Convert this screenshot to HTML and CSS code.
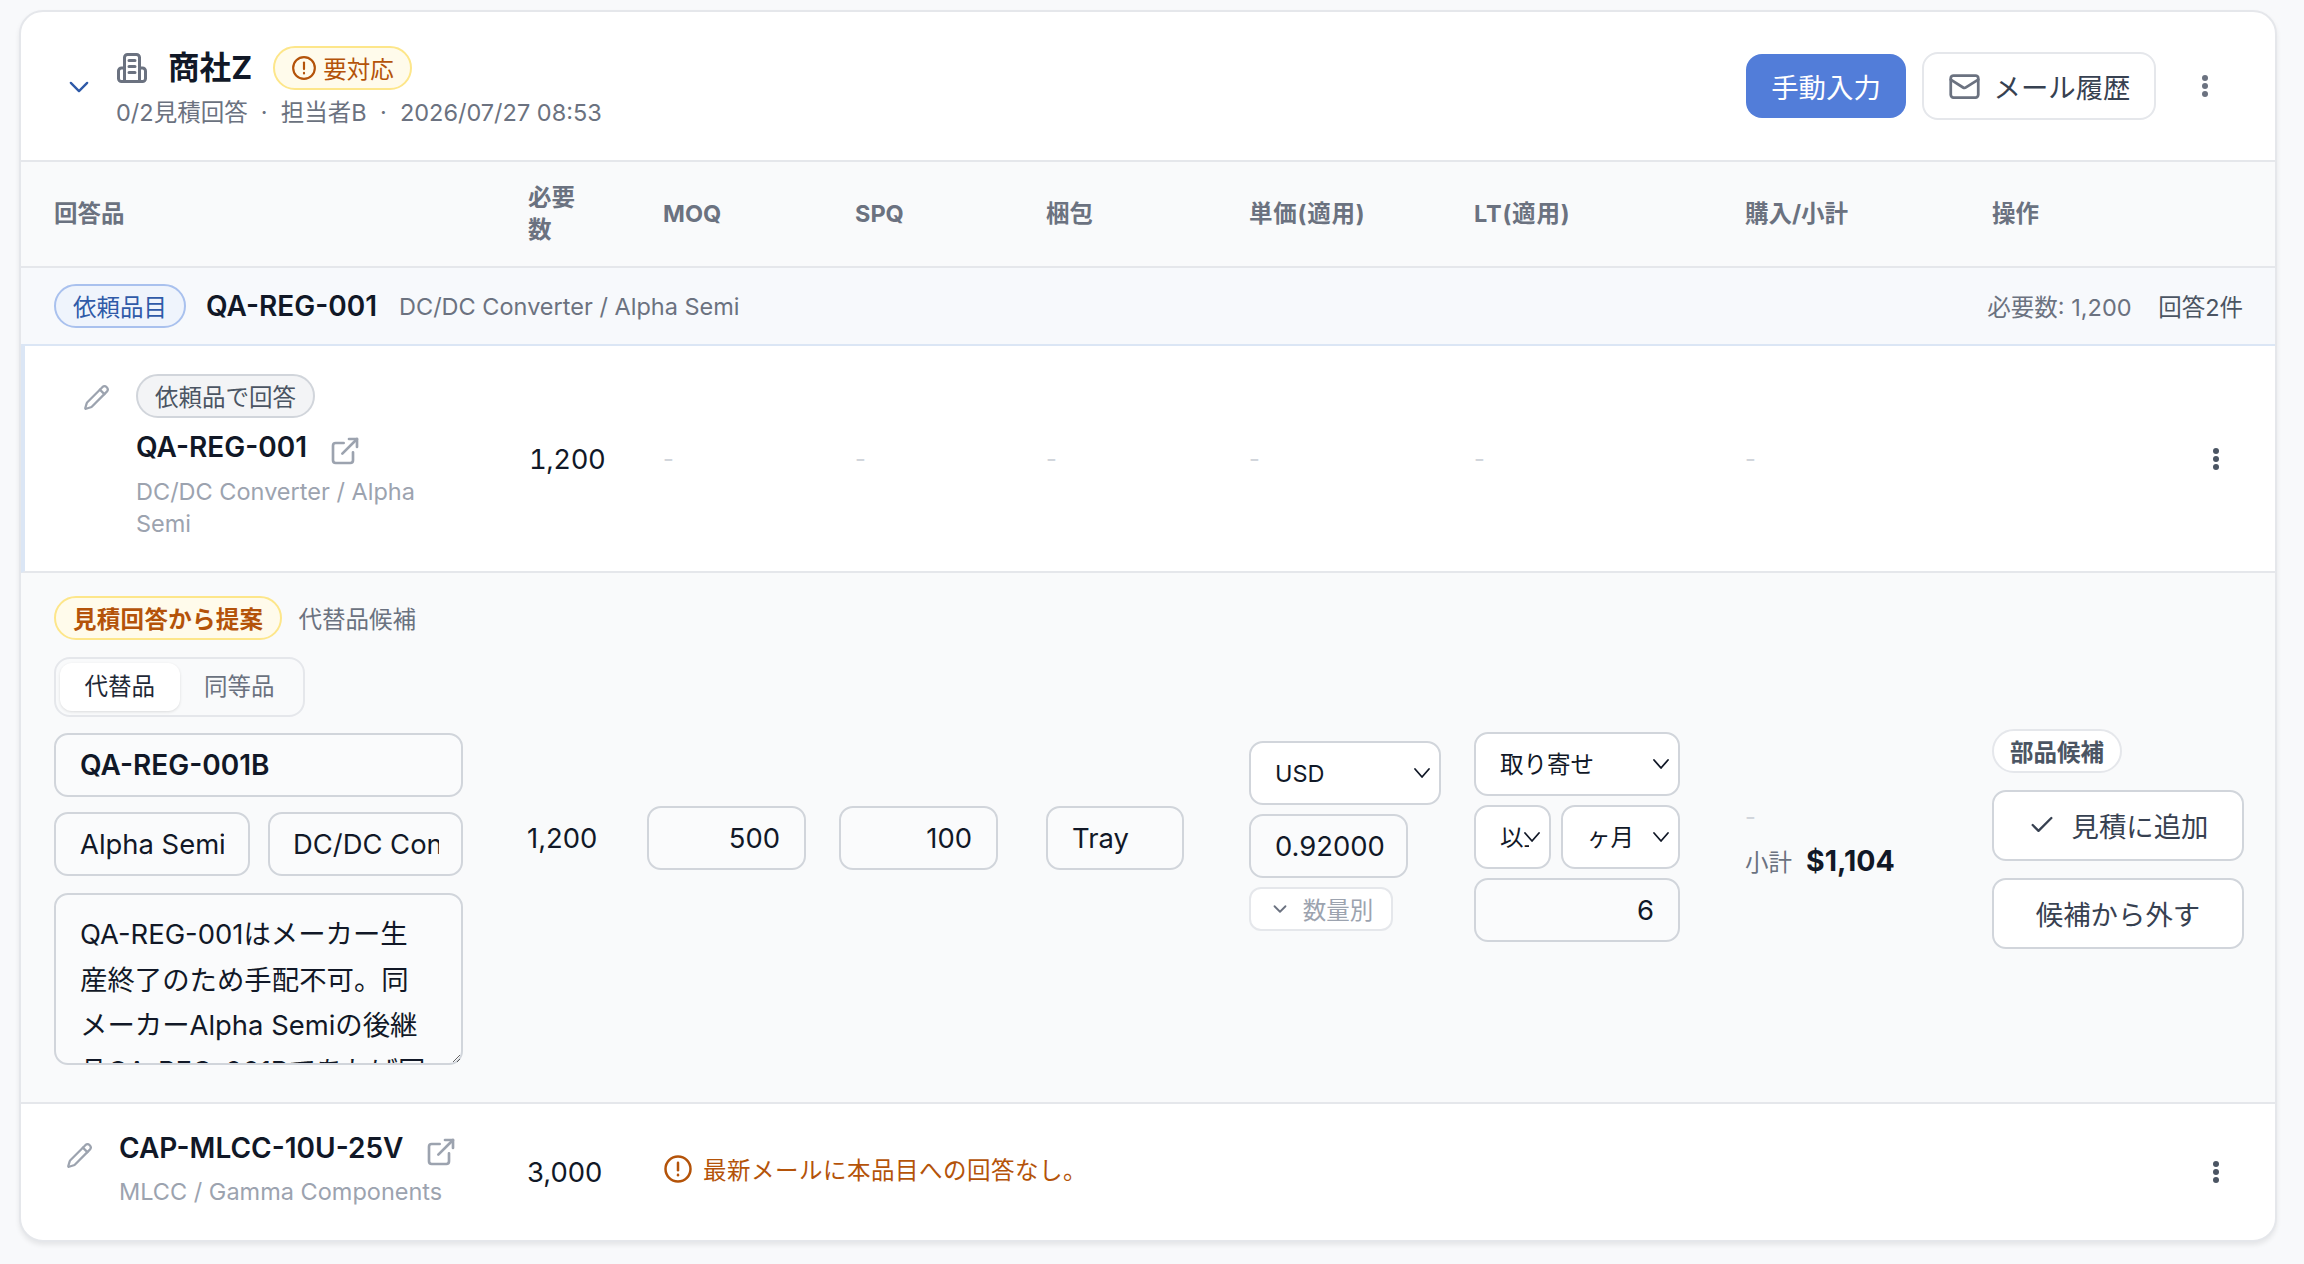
FILE: index.html
```html
<!DOCTYPE html>
<html lang="ja">
<head>
  <meta charset="UTF-8" />
  <meta name="viewport" content="width=device-width, initial-scale=1.0">
  <title>商社Z - 見積回答</title>

  <link rel="stylesheet" href="styles.css">
</head>
<body>
  <section class="card">
    <header class="card-header">
      <svg class="icon chevron-main" viewBox="0 0 24 24"><path d="M5 8.5l7 7 7-7"/></svg>
      <div class="supplier">
        <div class="supplier-top">
          <svg class="icon building" viewBox="0 0 24 24"><path d="M7 21V5a2 2 0 0 1 2-2h6a2 2 0 0 1 2 2v16"/><path d="M7 12H5a2 2 0 0 0-2 2v5a2 2 0 0 0 2 2h14a2 2 0 0 0 2-2v-5a2 2 0 0 0-2-2h-2"/><path d="M10 7h4M10 11h4M10 15h4"/></svg>
          <h2>商社Z</h2>
          <span class="pill pill-warn">
            <svg class="icon alert-small" viewBox="0 0 24 24"><circle cx="12" cy="12" r="10"/><path d="M12 7v6"/><path d="M12 16.5v.5"/></svg>
            要対応
          </span>
        </div>
        <p class="supplier-meta">0/2見積回答 &nbsp;·&nbsp; 担当者B &nbsp;·&nbsp; 2026/07/27 08:53</p>
      </div>
      <div class="header-actions">
        <button class="btn-primary">手動入力</button>
        <button class="btn-outline">
          <svg class="icon mail" viewBox="0 0 24 24"><rect x="2" y="4" width="20" height="16" rx="2"/><path d="M22 7l-8.97 5.7a1.94 1.94 0 0 1-2.06 0L2 7"/></svg>
          メール履歴
        </button>
        <svg class="dots dots-gray" viewBox="0 0 8 24"><circle cx="4" cy="4" r="3"/><circle cx="4" cy="12" r="3"/><circle cx="4" cy="20" r="3"/></svg>
      </div>
    </header>

    <table class="quote-table">
      <colgroup>
        <col class="col-part">
        <col class="col-qty">
        <col class="col-moq">
        <col class="col-spq">
        <col class="col-pack">
        <col class="col-price">
        <col class="col-lt">
        <col class="col-buy">
        <col class="col-ops">
      </colgroup>
      <thead>
        <tr>
          <th class="first">回答品</th>
          <th>必要<br>数</th>
          <th>MOQ</th>
          <th>SPQ</th>
          <th>梱包</th>
          <th class="th-paren">単価(適用)</th>
          <th class="th-paren">LT(適用)</th>
          <th>購入/小計</th>
          <th>操作</th>
        </tr>
      </thead>
      <tbody>
        <tr class="group-row">
          <td colspan="9">
            <div class="group-inner">
              <span class="pill pill-blue">依頼品目</span>
              <strong class="part-no">QA-REG-001</strong>
              <span class="group-desc">DC/DC Converter / Alpha Semi</span>
              <span class="group-right">必要数: 1,200 <span class="group-count">回答2件</span></span>
            </div>
          </td>
        </tr>

        <tr class="answer-row">
          <td class="part-cell">
            <div class="part-wrap">
              <svg class="icon pencil" viewBox="0 0 24 24"><path d="M21.17 6.81a2.82 2.82 0 0 0-3.98-3.99L3.84 16.17a2 2 0 0 0-.5.83l-1.32 4.36a.5.5 0 0 0 .62.62l4.35-1.32a2 2 0 0 0 .83-.5z"/><path d="M15 5l4 4"/></svg>
              <div class="part-info">
                <span class="pill pill-gray">依頼品で回答</span>
                <div class="part-line">
                  <strong class="part-no">QA-REG-001</strong>
                  <svg class="icon ext" viewBox="0 0 24 24"><path d="M18 13v6a2 2 0 0 1-2 2H5a2 2 0 0 1-2-2V8a2 2 0 0 1 2-2h6"/><path d="M15 3h6v6"/><path d="M10 14L21 3"/></svg>
                </div>
                <p class="part-desc">DC/DC Converter / Alpha Semi</p>
              </div>
            </div>
          </td>
          <td class="qty qty-wide">1,200</td>
          <td class="dash">-</td>
          <td class="dash">-</td>
          <td class="dash">-</td>
          <td class="dash">-</td>
          <td class="dash">-</td>
          <td class="dash">-</td>
          <td class="ops-end">
            <svg class="dots" viewBox="0 0 8 24"><circle cx="4" cy="4" r="3"/><circle cx="4" cy="12" r="3"/><circle cx="4" cy="20" r="3"/></svg>
          </td>
        </tr>

        <tr class="proposal-row">
          <td class="first proposal-main">
            <div class="proposal-title">
              <span class="pill pill-warn pill-bold">見積回答から提案</span>
              <span class="proposal-kind">代替品候補</span>
            </div>
            <div class="segment">
              <span class="segment-item active">代替品</span>
              <span class="segment-item">同等品</span>
            </div>
            <input class="field field-bold" type="text" value="QA-REG-001B">
            <div class="field-pair">
              <input class="field" type="text" value="Alpha Semi">
              <input class="field" type="text" value="DC/DC Converter">
            </div>
            <textarea class="field note">QA-REG-001はメーカー生産終了のため手配不可。同メーカーAlpha Semiの後継品QA-REG-001Bであれば同等仕様で手配可能です。</textarea>
          </td>
          <td class="qty">1,200</td>
          <td class="flush"><input class="field field-num field-moq" type="text" value="500"></td>
          <td class="flush"><input class="field field-num field-spq" type="text" value="100"></td>
          <td><input class="field field-pack" type="text" value="Tray"></td>
          <td>
            <div class="stack price-stack">
              <select class="field select-field"><option>USD</option></select>
              <input class="field field-price" type="text" value="0.92000">
              <button class="tier-btn">
                <svg class="icon chevron-small" viewBox="0 0 24 24"><path d="M6 9l6 6 6-6"/></svg>
                数量別
              </button>
            </div>
          </td>
          <td>
            <div class="stack lt-stack">
              <select class="field select-field"><option>取り寄せ</option></select>
              <div class="lt-pair">
                <select class="field select-field select-tight"><option>以上</option></select>
                <select class="field select-field"><option>ヶ月</option></select>
              </div>
              <input class="field field-num" type="text" value="6">
            </div>
          </td>
          <td>
            <div class="buy-cell">
              <span class="dash-mark">-</span>
              <div class="subtotal"><span>小計</span><strong>$1,104</strong></div>
            </div>
          </td>
          <td>
            <div class="stack ops-stack">
              <span class="pill pill-white">部品候補</span>
              <button class="btn-action">
                <svg class="icon check" viewBox="0 0 24 24"><path d="M20 6L9 17l-5-5"/></svg>
                見積に追加
              </button>
              <button class="btn-action">候補から外す</button>
            </div>
          </td>
        </tr>

        <tr class="last-row">
          <td class="part-cell">
            <div class="part-wrap">
              <svg class="icon pencil" viewBox="0 0 24 24"><path d="M21.17 6.81a2.82 2.82 0 0 0-3.98-3.99L3.84 16.17a2 2 0 0 0-.5.83l-1.32 4.36a.5.5 0 0 0 .62.62l4.35-1.32a2 2 0 0 0 .83-.5z"/><path d="M15 5l4 4"/></svg>
              <div class="part-info">
                <div class="part-line">
                  <strong class="part-no">CAP-MLCC-10U-25V</strong>
                  <svg class="icon ext" viewBox="0 0 24 24"><path d="M18 13v6a2 2 0 0 1-2 2H5a2 2 0 0 1-2-2V8a2 2 0 0 1 2-2h6"/><path d="M15 3h6v6"/><path d="M10 14L21 3"/></svg>
                </div>
                <p class="part-desc">MLCC / Gamma Components</p>
              </div>
            </div>
          </td>
          <td class="qty">3,000</td>
          <td colspan="6">
            <div class="no-answer">
              <svg class="icon alert" viewBox="0 0 24 24"><circle cx="12" cy="12" r="10"/><path d="M12 7v6"/><path d="M12 16.5v.5"/></svg>
              最新メールに本品目への回答なし。
            </div>
          </td>
          <td class="ops-end">
            <svg class="dots" viewBox="0 0 8 24"><circle cx="4" cy="4" r="3"/><circle cx="4" cy="12" r="3"/><circle cx="4" cy="20" r="3"/></svg>
          </td>
        </tr>
      </tbody>
    </table>
  </section>
</body>
</html>
```

FILE: styles.css
```css
* {
  box-sizing: border-box;
  margin: 0;
  padding: 0;
}

body {
  font-family: Inter, 'Noto Sans CJK JP', sans-serif;
  font-size: 27.4px;
  color: #111827;
  background-color: #f8f9fb;
  padding: 10px 27px 0 19px;
  min-height: 100vh;
}

.card {
  background-color: #fff;
  border: 2px solid #e5e7eb;
  border-radius: 24px;
  box-shadow: 0 3px 5px rgba(0, 0, 0, 0.08);
  overflow: hidden;
}

.icon {
  fill: none;
  stroke: currentColor;
  stroke-width: 2;
  stroke-linecap: round;
  stroke-linejoin: round;
  flex-shrink: 0;
}

/* Header */
.card-header {
  display: flex;
  align-items: center;
  height: 150px;
  padding: 0 66px 0 44px;
  border-bottom: 2px solid #e5e7eb;
}

.chevron-main {
  width: 28px;
  height: 28px;
  color: #2f5aa8;
  margin-right: 21px;
  margin-top: 2px;
}

.supplier {
  margin-top: 2px;
}

.supplier-top {
  display: flex;
  align-items: center;
}

.building {
  width: 36px;
  height: 36px;
  color: #6b7280;
  margin-right: 18px;
}

.supplier-top h2 {
  font-size: 31.6px;
  font-weight: 700;
  line-height: 44px;
  margin-right: 21px;
}

.supplier-meta {
  font-size: 23.5px;
  line-height: 32px;
  color: #6b7280;
  margin: 7px 0 0 2px;
}

.header-actions {
  margin-left: auto;
  display: flex;
  align-items: center;
}

.btn-primary {
  height: 64px;
  width: 160px;
  background-color: #527dd9;
  color: #fff;
  border: none;
  border-radius: 16px;
  font: inherit;
  margin-right: 16px;
}

.btn-outline {
  height: 68px;
  width: 234px;
  display: flex;
  align-items: center;
  justify-content: center;
  gap: 13px;
  background-color: #fff;
  border: 2px solid #e5e7eb;
  border-radius: 16px;
  font: inherit;
  color: #374151;
}

.mail {
  width: 33px;
  height: 33px;
  color: #6b7280;
}

.dots {
  width: 8px;
  height: 24px;
  fill: #4b5563;
}

.dots-gray {
  fill: #6b7280;
  margin-left: 45px;
}

/* Pills */
.pill {
  display: inline-flex;
  align-items: center;
  height: 44px;
  padding: 0 23px;
  border: 2px solid;
  border-radius: 22px;
  font-size: 23.5px;
  white-space: nowrap;
}

.pill-warn {
  background-color: #fffbeb;
  border-color: #fde68a;
  color: #b45309;
  padding: 0 16px;
}

.pill-warn .alert-small {
  width: 26px;
  height: 26px;
  margin-right: 6px;
  margin-left: 0;
}

.pill-bold {
  font-weight: 700;
  padding: 0 17px;
  letter-spacing: 0.3px;
}

.pill-blue {
  background-color: #eff4fc;
  border-color: #a9c1ee;
  color: #2f5aa8;
  padding: 0 17px;
}

.pill-gray {
  background-color: #f3f4f6;
  border-color: #d1d5db;
  color: #4b5563;
  padding: 0 17px;
}

.pill-white {
  background-color: #fff;
  border-color: #e5e7eb;
  color: #4b5563;
  font-weight: 700;
  padding: 0 16px;
  align-self: flex-start;
}

/* Table */
.quote-table {
  width: 100%;
  table-layout: fixed;
  border-collapse: separate;
  border-spacing: 0;
}

.col-part { width: 491px; }
.col-qty { width: 135px; }
.col-moq { width: 192px; }
.col-spq { width: 191px; }
.col-pack { width: 203px; }
.col-price { width: 225px; }
.col-lt { width: 271px; }
.col-buy { width: 247px; }
.col-ops { width: 299px; }

.quote-table th {
  height: 106px;
  padding-left: 16px;
  background-color: #f9fafb;
  border-bottom: 2px solid #e5e7eb;
  font-size: 23.5px;
  font-weight: 700;
  line-height: 32px;
  color: #6b7280;
  text-align: left;
}

.quote-table th.first {
  padding-left: 33px;
}

.quote-table th.th-paren {
  letter-spacing: 0.8px;
}

.quote-table td {
  padding-left: 16px;
  vertical-align: middle;
}

.quote-table .qty {
  font-size: 27.4px;
  padding-left: 15px;
}

.quote-table .qty-wide {
  padding-left: 17px;
  font-variant-numeric: tabular-nums;
  letter-spacing: -0.4px;
}

.quote-table .dash {
  color: #d1d5db;
  font-size: 23.5px;
}

.quote-table .ops-end {
  text-align: right;
  padding-right: 55px;
  padding-bottom: 4px;
}

.ops-end .dots {
  display: inline-block;
  vertical-align: middle;
}

/* Group row */
.group-row td {
  height: 78px;
  background-color: #f7f9fc;
  border-bottom: 2px solid #dbe6f5;
}

.quote-table .group-row td {
  padding: 0 32px 0 33px;
}

.group-inner {
  display: flex;
  align-items: center;
}

.part-no {
  font-size: 28px;
  font-weight: 600;
  color: #111827;
}

.group-inner .part-no {
  margin-left: 20px;
}

.group-desc {
  font-size: 23.5px;
  color: #6b7280;
  margin-left: 22px;
}

.group-right {
  margin-left: auto;
  font-size: 23.5px;
  color: #6b7280;
}

.group-count {
  color: #4b5563;
  margin-left: 20px;
}

/* Part cell */
.answer-row td {
  height: 227px;
  border-bottom: 2px solid #e5e7eb;
}

.quote-table .answer-row .part-cell {
  border-left: 4px solid #dbe6f5;
  padding-left: 58px;
}

.part-wrap {
  display: flex;
  align-items: flex-start;
}

.answer-row .part-wrap {
  margin-top: -3px;
}

.pencil {
  width: 27px;
  height: 27px;
  color: #9ca3af;
  margin-right: 26px;
  margin-top: 10px;
}

.part-line {
  display: flex;
  align-items: center;
  margin-top: 8px;
  line-height: 42px;
}

.ext {
  width: 32px;
  height: 32px;
  color: #9ca3af;
  margin-left: 22px;
  margin-top: 7px;
}

.part-desc {
  font-size: 23.5px;
  line-height: 32px;
  color: #9ca3af;
  margin-top: 8px;
  width: 300px;
}

/* Proposal row */
.proposal-row td {
  background-color: #f9fafb;
  border-bottom: 2px solid #e5e7eb;
}

.quote-table .proposal-main {
  padding: 23px 49px 37px 33px;
}

.proposal-title {
  display: flex;
  align-items: center;
}

.proposal-kind {
  font-size: 23.5px;
  color: #6b7280;
  margin-left: 16px;
}

.segment {
  display: flex;
  width: 251px;
  height: 60px;
  margin-top: 17px;
  padding: 4px;
  background-color: #f9fafb;
  border: 2px solid #e5e7eb;
  border-radius: 16px;
}

.segment-item {
  width: 120px;
  font-size: 23.5px;
  line-height: 48px;
  text-align: center;
  color: #6b7280;
}

.segment-item.active {
  background-color: #fff;
  color: #1f2937;
  border-radius: 12px;
  box-shadow: 0 1px 3px rgba(0, 0, 0, 0.12);
}

.field {
  display: block;
  width: 100%;
  height: 64px;
  padding: 0 24px;
  background-color: #fafbfc;
  border: 2px solid #d1d5db;
  border-radius: 14px;
  font-family: inherit;
  font-size: 27.4px;
  color: #111827;
}

.proposal-main > .field-bold {
  margin-top: 16px;
  font-size: 28px;
  font-weight: 600;
}

.field-pair {
  display: grid;
  grid-template-columns: 196px 1fr;
  gap: 18px;
  margin-top: 15px;
}

.field-pair .field:last-child {
  padding: 0 22px 0 23px;
}

.note {
  height: 172px;
  margin-top: 17px;
  padding: 17px 33px 0 24px;
  line-height: 45.6px;
  resize: vertical;
  overflow: hidden;
}

.field-num {
  text-align: right;
}

.quote-table .flush {
  padding-left: 0;
}

.field-moq {
  width: 159px;
}

.field-spq {
  width: 159px;
}

.field-pack {
  width: 138px;
}

.stack {
  display: flex;
  flex-direction: column;
}

.select-field {
  appearance: none;
  background-color: #fff;
  background-image: url("data:image/svg+xml,%3Csvg xmlns='http://www.w3.org/2000/svg' viewBox='0 0 24 24' fill='none' stroke='%23111827' stroke-width='1.8' stroke-linecap='round' stroke-linejoin='round'%3E%3Cpath d='M5 8l7 8 7-8'/%3E%3C/svg%3E");
  background-repeat: no-repeat;
  background-position: right 5px center;
  background-size: 24px 24px;
  padding-right: 4px;
  font-size: 23.5px;
}

.select-tight {
  padding-right: 20px;
}

.price-stack {
  width: 192px;
  margin-top: -3px;
}

.field-price {
  width: 159px;
  margin-top: 9px;
  padding-right: 8px;
}

.tier-btn {
  display: flex;
  align-items: center;
  justify-content: center;
  gap: 12px;
  width: 144px;
  height: 44px;
  margin-top: 9px;
  background-color: #fff;
  border: 2px solid #e5e7eb;
  border-radius: 12px;
  font-family: inherit;
  font-size: 23.5px;
  color: #9ca3af;
}

.chevron-small {
  width: 22px;
  height: 22px;
  color: #6b7280;
}

.lt-stack {
  width: 206px;
  gap: 9px;
  margin-top: -1px;
}

.lt-pair {
  display: grid;
  grid-template-columns: 77px 1fr;
  gap: 10px;
}

.buy-cell {
  display: flex;
  flex-direction: column;
  margin-top: 4px;
}

.dash-mark {
  color: #d1d5db;
  font-size: 23.5px;
  line-height: 32px;
}

.subtotal {
  display: flex;
  align-items: center;
  gap: 14px;
  margin-top: 10px;
  font-size: 23.5px;
  color: #6b7280;
}

.subtotal strong {
  font-size: 28.5px;
  font-weight: 700;
  color: #111827;
}

.ops-stack {
  width: 252px;
  gap: 17px;
  margin-top: 2px;
}

.btn-action {
  display: flex;
  align-items: center;
  justify-content: center;
  gap: 16px;
  height: 71px;
  background-color: #fff;
  border: 2px solid #d1d5db;
  border-radius: 14px;
  font-family: inherit;
  font-size: 27.4px;
  color: #374151;
}

.check {
  width: 28px;
  height: 28px;
}

/* Last row */
.last-row td {
  height: 136px;
}

.quote-table .last-row .part-cell {
  padding-left: 45px;
  padding-bottom: 9px;
}

.last-row .pencil {
  margin-top: 15px;
}

.last-row .part-line {
  margin-top: 0;
}

.last-row .part-desc {
  margin-top: 7px;
  width: auto;
}

.quote-table .last-row .ops-end {
  padding-bottom: 6px;
}

.no-answer {
  display: flex;
  align-items: center;
  gap: 10px;
  font-size: 23.5px;
  letter-spacing: 0.5px;
  color: #b45309;
  padding-bottom: 7px;
}

.alert {
  width: 30px;
  height: 30px;
}
```
